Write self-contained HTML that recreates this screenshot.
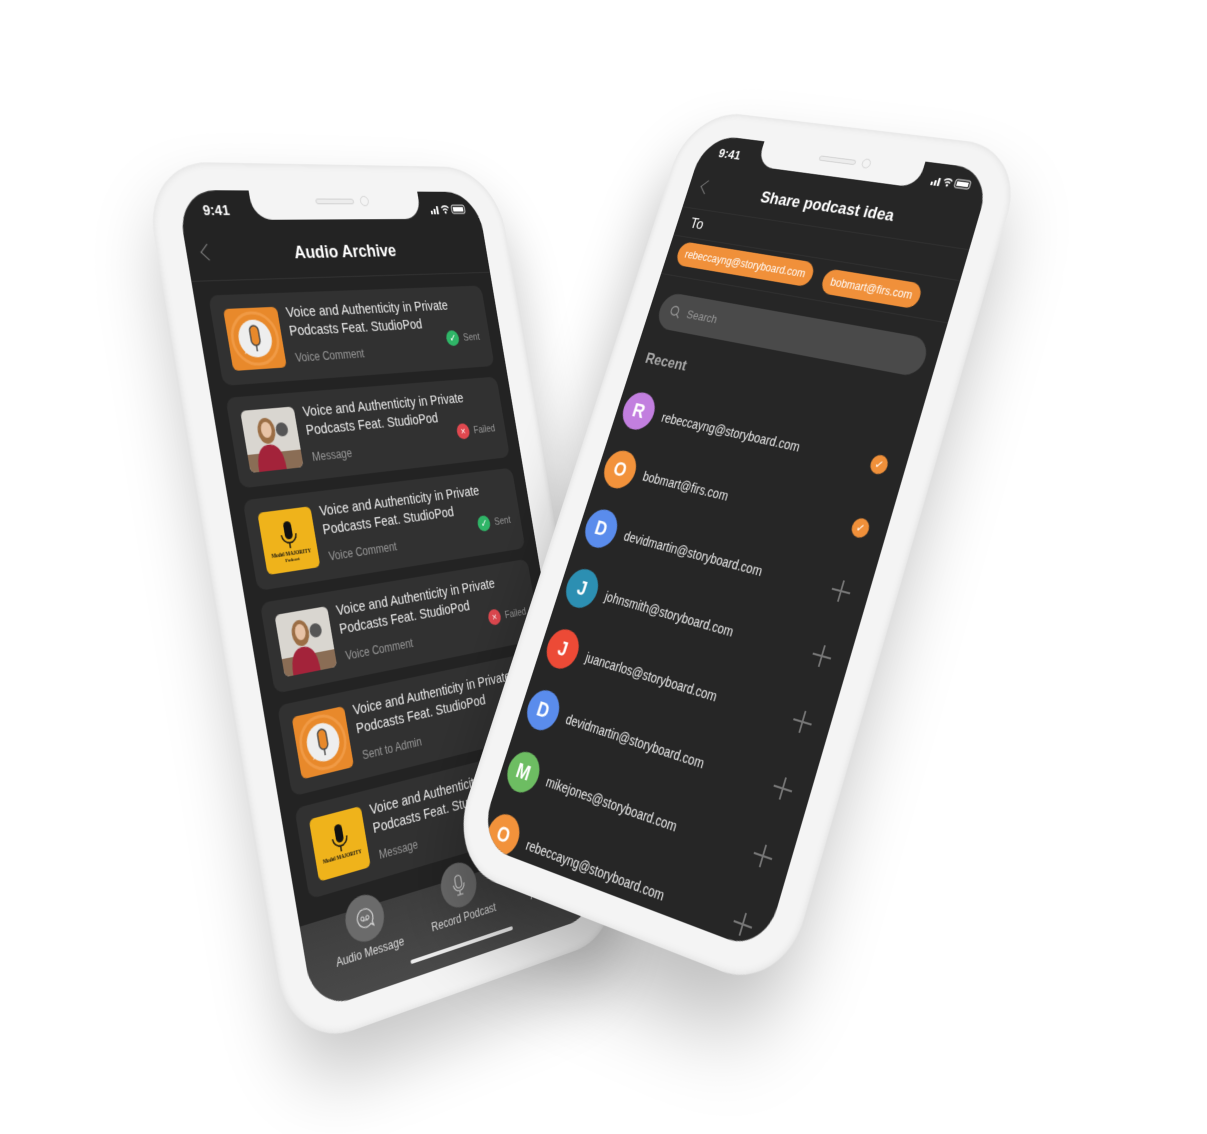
<!DOCTYPE html>
<html><head><meta charset="utf-8"><style>
*{margin:0;padding:0;box-sizing:border-box}
html,body{width:1207px;height:1134px;background:#fff;overflow:hidden;font-family:"Liberation Sans",sans-serif}
.phone{position:absolute;left:0;top:0;width:375px;height:812px;transform-origin:0 0}
.frame{position:absolute;left:-32px;top:-28px;right:-32px;bottom:-30px;border-radius:72px;background:#f4f4f4;box-shadow:0 40px 70px rgba(0,0,0,.22),inset 0 0 8px rgba(0,0,0,.10)}
.screen{position:absolute;left:0;top:0;width:375px;height:812px;border-radius:44px;overflow:hidden;color:#fff}
.notch{position:absolute;left:82px;top:0;width:211px;height:30px;background:#f4f4f4;border-radius:0 0 22px 22px}
.notch .sp{position:absolute;left:78px;top:8px;width:48px;height:6px;border-radius:3px;border:1px solid #d0d0d0;background:#ececec}
.notch .cam{position:absolute;left:134px;top:5px;width:11px;height:11px;border-radius:50%;border:1px solid #d0d0d0}
.time{position:absolute;left:26px;top:12px;font-size:15px;font-weight:600}
.sicons{position:absolute;right:18px;top:13px}
.back{position:absolute;left:18px;top:56px;width:12px;height:12px;border-left:1.5px solid #888;border-bottom:1.5px solid #888;transform:rotate(45deg)}
.title{position:absolute;left:0;right:0;text-align:center;font-weight:700;font-size:19px}
.card{position:absolute;left:16px;width:343px;height:90px;border-radius:10px;background:#313131}
.thumb{position:absolute;left:14px;top:14px;width:62px;height:62px;border-radius:6px;overflow:hidden}
.ct{position:absolute;left:86px;top:12px;font-size:14.5px;line-height:19px;color:#eee}
.cs{position:absolute;left:88px;top:60px;font-size:12px;color:#999}
.st{position:absolute;right:14px;top:48px;font-size:11px;color:#999;display:flex;align-items:center;gap:6px}
.dot{width:17px;height:17px;border-radius:50%;display:flex;align-items:center;justify-content:center;color:#fff;font-size:11px}
.row{position:absolute;left:0;width:375px;height:44px}
.av{position:absolute;left:8px;top:0;width:42px;height:42px;border-radius:50%;display:flex;align-items:center;justify-content:center;font-weight:700;font-size:22px;color:#fff}
.em{position:absolute;left:62px;top:14px;font-size:14px;color:#eee}
.chk{position:absolute;left:334px;top:12px;width:20px;height:20px;border-radius:50%;background:#f0903a;display:flex;align-items:center;justify-content:center;font-size:12px;color:#fff}
.plus{position:absolute;left:332px;top:10px;width:22px;height:22px}
.plus:before,.plus:after{content:"";position:absolute;background:#777}
.plus:before{left:10px;top:0;width:1.5px;height:22px}
.plus:after{left:0;top:10px;width:22px;height:1.5px}
.chip{position:absolute;top:128px;height:28px;border-radius:14px;background:#f0903a;color:#fff;font-size:12.5px;line-height:28px;padding:0 10px}
</style></head><body>

<!-- LEFT PHONE -->
<div class="phone" style="transform:matrix3d(0.97677,0.07605,0,0.00036827,0.16878,1.00860,0,-0.0000036773,0,0,1,0,176,190,0,1)">
<div class="frame"></div>
<div class="screen" style="background:#232323">
<div class="notch"><div class="sp"></div><div class="cam"></div></div>
<div class="time">9:41</div>
<svg class="sicons" width="50" height="12" viewBox="0 0 50 12"><rect x="0" y="8" width="2.5" height="4" fill="#fff"/><rect x="4" y="6" width="2.5" height="6" fill="#fff"/><rect x="8" y="3" width="2.5" height="9" fill="#fff"/><path d="M15 5a7 7 0 0 1 10 0M17 7.5a4 4 0 0 1 6 0" stroke="#fff" stroke-width="1.6" fill="none"/><circle cx="20" cy="10" r="1.4" fill="#fff"/><rect x="29" y="2" width="18" height="9" rx="2" stroke="#fff" fill="none"/><rect x="31" y="4" width="14" height="5" fill="#fff"/></svg>
<div class="back"></div>
<div class="title" style="top:54px">Audio Archive</div>
<div style="position:absolute;left:0;right:0;top:90px;height:1px;background:#333"></div>

<div class="card" style="top:105px"><div class="thumb"><svg width="62" height="62"><rect width="62" height="62" fill="#e8892b"/><circle cx="31" cy="31" r="26" fill="none" stroke="#f09a45" stroke-width="3"/><circle cx="31" cy="31" r="19" fill="#eee"/><path d="M16 46l6-8 4 4z" fill="#eee"/><rect x="26" y="18" width="10" height="20" rx="5" fill="#e8892b" stroke="#444" stroke-width="1.5"/><line x1="31" y1="38" x2="31" y2="44" stroke="#444" stroke-width="1.5"/></svg></div><div class="ct">Voice and Authenticity in Private<br>Podcasts Feat. StudioPod</div><div class="cs">Voice Comment</div><div class="st"><div class="dot" style="background:#2fb567">✓</div>Sent</div></div>

<div class="card" style="top:207px"><div class="thumb"><svg width="62" height="62"><rect width="62" height="62" fill="#d9d6d0"/><rect x="0" y="44" width="62" height="18" fill="#8a6d55"/><circle cx="44" cy="22" r="7" fill="#555"/><ellipse cx="26" cy="22" rx="10" ry="13" fill="#9b6e45"/><ellipse cx="26" cy="21" rx="6" ry="8" fill="#e8c3a6"/><path d="M10 62c0-18 6-26 16-26s16 8 16 26z" fill="#a3233a"/></svg></div><div class="ct">Voice and Authenticity in Private<br>Podcasts Feat. StudioPod</div><div class="cs">Message</div><div class="st"><div class="dot" style="background:#e0484f">×</div>Failed</div></div>

<div class="card" style="top:309px"><div class="thumb"><svg width="62" height="62"><rect width="62" height="62" fill="#efb31b"/><rect x="27" y="12" width="9" height="18" rx="4.5" fill="#111"/><path d="M23 25a8.5 8.5 0 0 0 17 0" stroke="#111" stroke-width="1.5" fill="none"/><line x1="31" y1="34" x2="31" y2="39" stroke="#111" stroke-width="1.5"/><text x="31" y="46" font-size="5.5" font-weight="700" text-anchor="middle" fill="#111" font-family="Liberation Serif">Model MAJORITY</text><text x="31" y="52" font-size="5" font-weight="700" text-anchor="middle" fill="#111" font-family="Liberation Serif">Podcast</text></svg></div><div class="ct">Voice and Authenticity in Private<br>Podcasts Feat. StudioPod</div><div class="cs">Voice Comment</div><div class="st"><div class="dot" style="background:#2fb567">✓</div>Sent</div></div>

<div class="card" style="top:411px"><div class="thumb"><svg width="62" height="62"><rect width="62" height="62" fill="#d9d6d0"/><rect x="0" y="44" width="62" height="18" fill="#8a6d55"/><circle cx="44" cy="22" r="7" fill="#555"/><ellipse cx="26" cy="22" rx="10" ry="13" fill="#9b6e45"/><ellipse cx="26" cy="21" rx="6" ry="8" fill="#e8c3a6"/><path d="M10 62c0-18 6-26 16-26s16 8 16 26z" fill="#a3233a"/></svg></div><div class="ct">Voice and Authenticity in Private<br>Podcasts Feat. StudioPod</div><div class="cs">Voice Comment</div><div class="st"><div class="dot" style="background:#e0484f">×</div>Failed</div></div>

<div class="card" style="top:513px"><div class="thumb"><svg width="62" height="62"><rect width="62" height="62" fill="#e8892b"/><circle cx="31" cy="31" r="26" fill="none" stroke="#f09a45" stroke-width="3"/><circle cx="31" cy="31" r="19" fill="#eee"/><path d="M16 46l6-8 4 4z" fill="#eee"/><rect x="26" y="18" width="10" height="20" rx="5" fill="#e8892b" stroke="#444" stroke-width="1.5"/><line x1="31" y1="38" x2="31" y2="44" stroke="#444" stroke-width="1.5"/></svg></div><div class="ct">Voice and Authenticity in Private<br>Podcasts Feat. StudioPod</div><div class="cs">Sent to Admin</div><div class="st"><div class="dot" style="background:#2fb567">✓</div>Sent</div></div>

<div class="card" style="top:615px"><div class="thumb"><svg width="62" height="62"><rect width="62" height="62" fill="#efb31b"/><rect x="27" y="12" width="9" height="18" rx="4.5" fill="#111"/><path d="M23 25a8.5 8.5 0 0 0 17 0" stroke="#111" stroke-width="1.5" fill="none"/><line x1="31" y1="34" x2="31" y2="39" stroke="#111" stroke-width="1.5"/><text x="31" y="46" font-size="5.5" font-weight="700" text-anchor="middle" fill="#111" font-family="Liberation Serif">Model MAJORITY</text></svg></div><div class="ct">Voice and Authenticity in Private<br>Podcasts Feat. StudioPod</div><div class="cs">Message</div></div>

<div style="position:absolute;left:0;top:728px;width:375px;height:90px;background:linear-gradient(#3e3e3e,#4a4a4a)"></div>
<div style="position:absolute;left:52px;top:716px;width:46px;height:46px;border-radius:50%;background:#6b6b6b;display:flex;align-items:center;justify-content:center"><svg width="22" height="22" viewBox="0 0 22 22"><path d="M11 2a9 9 0 1 0 6 15.7L20 20l-1-4A9 9 0 0 0 11 2z" stroke="#ddd" fill="none" stroke-width="1.2"/><circle cx="8" cy="11" r="2" stroke="#ddd" fill="none"/><circle cx="14" cy="11" r="2" stroke="#ddd" fill="none"/><line x1="8" y1="13" x2="14" y2="13" stroke="#ddd"/></svg></div>
<div style="position:absolute;left:172px;top:712px;width:46px;height:46px;border-radius:50%;background:#6b6b6b;display:flex;align-items:center;justify-content:center"><svg width="22" height="24" viewBox="0 0 22 24"><rect x="7" y="2" width="8" height="13" rx="4" stroke="#ddd" fill="none" stroke-width="1.2"/><path d="M4 11a7 7 0 0 0 14 0M11 18v4M7 22h8" stroke="#ddd" fill="none" stroke-width="1.2"/></svg></div>
<div style="position:absolute;left:292px;top:712px;width:46px;height:46px;border-radius:50%;background:#6b6b6b"></div>
<div style="position:absolute;left:20px;top:766px;width:110px;text-align:center;font-size:12px;color:#ddd">Audio Message</div>
<div style="position:absolute;left:140px;top:762px;width:110px;text-align:center;font-size:12px;color:#ddd">Record Podcast</div>
<div style="position:absolute;left:260px;top:762px;width:110px;text-align:center;font-size:12px;color:#ddd">Audio Note</div>
<div style="position:absolute;left:120px;top:794px;width:135px;height:4px;border-radius:2px;background:#eee"></div>
</div></div>

<!-- RIGHT PHONE -->
<div class="phone" style="transform:matrix3d(0.54171,0.05795,0,-0.00022386,-0.32054,0.80506,0,-0.000082131,0,0,1,0,706,134,0,1)">
<div class="frame" style="box-shadow:0 50px 80px rgba(0,0,0,.25),inset 0 0 8px rgba(0,0,0,.10)"></div>
<div class="screen" style="background:#262626">
<div class="notch"><div class="sp"></div><div class="cam"></div></div>
<div class="time">9:41</div>
<svg class="sicons" width="50" height="12" viewBox="0 0 50 12"><rect x="0" y="8" width="2.5" height="4" fill="#fff"/><rect x="4" y="6" width="2.5" height="6" fill="#fff"/><rect x="8" y="3" width="2.5" height="9" fill="#fff"/><path d="M15 5a7 7 0 0 1 10 0M17 7.5a4 4 0 0 1 6 0" stroke="#fff" stroke-width="1.6" fill="none"/><circle cx="20" cy="10" r="1.4" fill="#fff"/><rect x="29" y="2" width="18" height="9" rx="2" stroke="#fff" fill="none"/><rect x="31" y="4" width="14" height="5" fill="#fff"/></svg>
<div class="back"></div>
<div class="title" style="top:54px">Share podcast idea</div>
<div style="position:absolute;left:0;right:0;top:88px;height:1px;background:#313131"></div>
<div style="position:absolute;left:18px;top:96px;font-size:17px">To</div>
<div style="position:absolute;left:0;right:0;top:122px;height:1px;background:#313131"></div>
<div class="chip" style="left:14px">rebeccayng@storyboard.com</div>
<div class="chip" style="left:212px;top:132px">bobmart@firs.com</div>
<div style="position:absolute;left:0;right:0;top:168px;height:1px;background:#313131"></div>
<div style="position:absolute;left:14px;top:188px;width:347px;height:42px;border-radius:21px;background:#4a4a4a"><svg style="position:absolute;left:14px;top:13px" width="16" height="16"><circle cx="6.5" cy="6.5" r="5" stroke="#999" fill="none" stroke-width="1.3"/><line x1="10" y1="10" x2="14" y2="14" stroke="#999" stroke-width="1.3"/></svg><span style="position:absolute;left:38px;top:13px;font-size:13px;color:#999">Search</span></div>
<div style="position:absolute;left:16px;top:256px;font-size:17px;font-weight:700;color:#aaa">Recent</div>

<div class="row" style="top:304px"><div class="av" style="background:#c27fdf">R</div><div class="em">rebeccayng@storyboard.com</div><div class="chk">✓</div></div>
<div class="row" style="top:371px"><div class="av" style="background:#f2923b">O</div><div class="em">bobmart@firs.com</div><div class="chk">✓</div></div>
<div class="row" style="top:438px"><div class="av" style="background:#5a8cec">D</div><div class="em">devidmartin@storyboard.com</div><div class="plus"></div></div>
<div class="row" style="top:505px"><div class="av" style="background:#2c8fb2">J</div><div class="em">johnsmith@storyboard.com</div><div class="plus"></div></div>
<div class="row" style="top:572px"><div class="av" style="background:#ec4a36">J</div><div class="em">juancarlos@storyboard.com</div><div class="plus"></div></div>
<div class="row" style="top:639px"><div class="av" style="background:#5a8cec">D</div><div class="em">devidmartin@storyboard.com</div><div class="plus"></div></div>
<div class="row" style="top:706px"><div class="av" style="background:#6dbd62">M</div><div class="em">mikejones@storyboard.com</div><div class="plus"></div></div>
<div class="row" style="top:773px"><div class="av" style="background:#f2923b">O</div><div class="em">rebeccayng@storyboard.com</div><div class="plus"></div></div>
</div></div>
</body></html>
